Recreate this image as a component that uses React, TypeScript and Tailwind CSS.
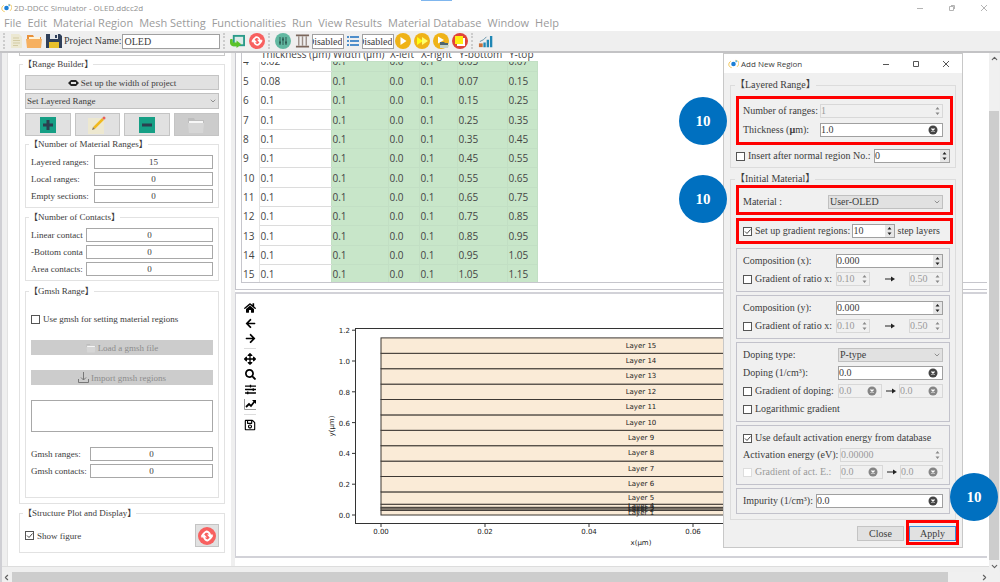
import type { ComponentProps, ReactNode } from "react"

import {
  FaArrowLeft,
  FaArrowRight,
  FaArrowsAlt,
  FaHome,
  FaRegSave,
  FaSearch,
  FaSlidersH,
} from "react-icons/fa"
import { LuChevronDown, LuChevronLeft, LuChevronRight, LuChevronUp } from "react-icons/lu"

const MENUS = [
  "File",
  "Edit",
  "Material Region",
  "Mesh Setting",
  "Functionalities",
  "Run",
  "View Results",
  "Material Database",
  "Window",
  "Help",
]

const COLUMNS = [
  { label: "", width: "w-[17px]" },
  { label: "Thickness (µm)", width: "w-[72px]" },
  { label: "Width (µm)", width: "w-[57px]" },
  { label: "X-left", width: "w-[31px]" },
  { label: "X-right", width: "w-[38px]" },
  { label: "Y-bottom", width: "w-[50px]" },
  { label: "Y-top", width: "w-[30px]" },
]

/**
 * Layer boundaries in µm, bottom to top
 */
const BOUNDS = [
  0, 0.03, 0.04, 0.05, 0.07, 0.15, 0.25, 0.35, 0.45, 0.55, 0.65, 0.75, 0.85, 0.95, 1.05, 1.15,
]

const ROWS = BOUNDS.slice(4).map((top, i) => {
  const bottom = BOUNDS[i + 3]
  const thickness = Number((top - bottom).toFixed(2))
  return [String(i + 4), String(thickness), "0.1", "0.0", "0.1", bottom.toFixed(2), top.toFixed(2)]
})

const toX = (v: number) => 145 + v * 5200
const toY = (v: number) => 221 - v * 154

export default function App() {
  return (
    <div className="flex h-screen flex-col overflow-hidden bg-white font-['Liberation_Serif','Noto_Sans_CJK_TC',serif] text-[9px] leading-3 text-[#3c3c3c]">
      <TitleBar />
      <MenuBar />
      <Toolbar />
      <main className="relative flex min-h-0 flex-1 border-l-2 border-[#cfcfd4] bg-[#efefef]">
        <div className="flex min-w-0 flex-1 flex-col">
          <div className="flex min-h-0 flex-1">
            <Sidebar />
            <div className="flex min-w-0 flex-1 flex-col bg-white pb-2">
              <RangeTable />
              <StructurePlot />
            </div>
          </div>
          <div className="h-1.5 border-t border-[#dddddd]" />
        </div>
        <div className="flex w-2.5 flex-col items-center bg-[#f0f0f0] text-[#606060]">
          <button aria-label="Scroll up" className="h-2.5">
            <LuChevronUp size={9} strokeWidth={3} />
          </button>
          <div className="mt-12 w-full flex-1 bg-[#cdcdcd]" />
          <button aria-label="Scroll down" className="h-3">
            <LuChevronDown size={9} strokeWidth={3} />
          </button>
        </div>
        <div className="w-px" />
        <AddRegionDialog />
      </main>
      <div className="flex h-2.5 items-center border-l-2 border-[#cfcfd4] bg-[#f0f0f0] text-[#606060]">
        <button aria-label="Scroll left" className="w-2.5">
          <LuChevronLeft size={9} strokeWidth={3} />
        </button>
        <div className="mr-8 h-full flex-1 bg-[#cdcdcd]" />
        <button aria-label="Scroll right" className="w-5">
          <LuChevronRight size={9} strokeWidth={3} />
        </button>
      </div>
    </div>
  )
}

function TitleBar() {
  return (
    <header className="flex h-[15px] items-center gap-0.5 pl-px font-['Open_Sans',sans-serif] text-[8px] text-[#8f8f8f]">
      <AppLogo />
      <h1>2D-DDCC Simulator - OLED.ddcc2d</h1>
      <div className="ml-[276px] h-px w-[31px] self-start bg-[#7fb6ee]" />
      <div className="flex-1" />
      <div className="flex gap-6 pr-3">
        <WindowControls color="#b4b4b4" restore />
      </div>
    </header>
  )
}

function MenuBar() {
  return (
    <nav className="flex h-4 items-center gap-1.5 pl-1 font-['Open_Sans',sans-serif] text-[11px] text-[#9b9b9b]">
      {MENUS.map((menu) => (
        <button className="whitespace-nowrap" key={menu}>
          {menu}
        </button>
      ))}
    </nav>
  )
}

function Toolbar() {
  return (
    <div className="flex h-[22px] shrink-0 items-center border-b-2 border-[#c3c3c5] bg-[#efefef] text-[10px]">
      <Grip />
      <button aria-label="New" className="mr-0.5">
        <svg height="16" viewBox="0 0 16 16" width="16">
          <path d="M3 1h8l3 3v11H3z" fill="#ece8d2" />
          <path d="M5 5h6M5 7.500h7M5 10h7M5 12.500h5" stroke="#d3cba4" />
        </svg>
      </button>
      <button aria-label="Open" className="mr-1">
        <svg height="16" viewBox="0 0 16 16" width="16">
          <path d="M1 2h6l1 2h7v3H1z" fill="#e8913a" />
          <path d="M3 4h11v3H3z" fill="#fff3d8" />
          <path d="M0 6h16l-1 9H1z" fill="#f6b060" />
        </svg>
      </button>
      <button aria-label="Save" className="mr-0.5">
        <svg height="16" viewBox="0 0 16 16" width="16">
          <path d="M0 1h14l2 2v12H0z" fill="#30405a" />
          <path d="M4 1h8v5H4z" fill="#e6e9ec" />
          <path d="M9 2h2v3H9z" fill="#30405a" />
          <path d="M3 9h10v6H3z" fill="#e8c02c" />
        </svg>
      </button>
      <label className="whitespace-nowrap" htmlFor="project">
        Project Name:
      </label>
      <input
        className="ml-px h-[15px] w-[98px] border border-[#a0a0a0] bg-white px-px"
        defaultValue="OLED"
        id="project"
      />
      <Grip />
      <button aria-label="Import project" className="mx-0.5">
        <svg height="15" viewBox="0 0 16 16" width="15">
          <rect fill="#dcebe8" height="10" stroke="#2a9b8a" strokeWidth="2" width="11" x="4" y="2" />
          <path d="M0 6c0-1 3-1 3 0v3h4V7l5 4-5 4v-2H4c-3 0-4-2-4-4z" fill="#5cc32a" />
        </svg>
      </button>
      <button aria-label="Refresh" className="ml-0.5">
        <RefreshIcon />
      </button>
      <Grip />
      <button aria-label="Settings" className="mr-1 ml-0.5">
        <svg height="16" viewBox="0 0 16 16" width="16">
          <circle cx="8" cy="8" fill="#62b8a1" r="8" />
          <path d="M5 4v8M8 4v8M11 4v8" stroke="#2f5d55" />
          <path d="M4 9.500h2M7 6.500h2M10 9.500h2" stroke="#2f5d55" strokeWidth="2" />
        </svg>
      </button>
      <button aria-label="Columns" className="mr-0.5">
        <svg height="16" viewBox="0 0 16 16" width="15">
          <path d="M1 2h14M1 14h14" stroke="#7b675c" strokeWidth="2" />
          <path d="M4 3v10M8 3v10M12 3v10" stroke="#9c8f88" strokeWidth="1.500" />
        </svg>
      </button>
      <input
        aria-label="Columns state"
        className="h-[15px] w-8 border border-[#a0a0a0] bg-white pr-px"
        defaultValue="Disabled"
        dir="rtl"
      />
      <button aria-label="List" className="mx-0.5">
        <svg height="14" viewBox="0 0 14 14" width="14">
          <path d="M1 3h2M1 7h2M1 11h2M4 3h9M4 7h9M4 11h9" stroke="#4f8fcb" strokeWidth="2" />
        </svg>
      </button>
      <input
        aria-label="List state"
        className="h-[15px] w-8 border border-[#a0a0a0] bg-white pr-px"
        defaultValue="Disabled"
        dir="rtl"
      />
      <div className="flex gap-[3px] pl-px">
        <button aria-label="Run">
          <svg height="16" viewBox="0 0 16 16" width="16">
            <circle cx="8" cy="8" fill="#efb318" r="8" />
            <path d="M5.500 4v8l6-4z" fill="#fff" />
          </svg>
        </button>
        <button aria-label="Run all">
          <svg height="16" viewBox="0 0 16 16" width="16">
            <circle cx="8" cy="8" fill="#efb318" r="8" />
            <path d="M3 4v8l6-4z" fill="#ffff10" />
            <path d="M8 4v8l6-4z" fill="#ffff70" />
          </svg>
        </button>
        <button aria-label="Run from folder">
          <svg height="16" viewBox="0 0 16 16" width="16">
            <circle cx="8" cy="8" fill="#efb318" r="8" />
            <path d="M5 3.500v7l6-3.500z" fill="#fff" />
            <path d="M7 9h4l1 1h3v5H7z" fill="#4d6670" />
            <path d="M7 12h9l-1 3H7z" fill="#c6d3c5" />
          </svg>
        </button>
        <button aria-label="Stop">
          <svg height="16" viewBox="0 0 16 16" width="16">
            <circle cx="8" cy="8" fill="#e0443b" r="8" />
            <path d="M5 5h8v8H5z" fill="#fff" />
            <path d="M3 3h8v8H3z" fill="#ffee10" />
          </svg>
        </button>
      </div>
      <Grip />
      <button aria-label="Charts" className="ml-0.5">
        <svg height="15" viewBox="0 0 16 16" width="15">
          <path d="M7 14V9M10.500 14V6M14 14V2" stroke="#1f87b5" strokeWidth="2.500" />
          <path d="M1 10h4v4H1z" fill="#c9703c" />
          <path d="M2 8l4-2 3-3" fill="none" stroke="#5d8fa8" />
        </svg>
      </button>
    </div>
  )
}

function Sidebar() {
  return (
    <aside className="mr-1 ml-[5px] w-[224px] shrink-0 border-l border-[#e2e2e2] bg-white pr-1.5 pl-[11px]">
      <div className="h-[3px] border-x border-b border-[#c9c9c9]" />
      <Group className="mt-0.5 pb-[5px]" title="Range Builder">
        <button className="flex h-[15px] w-full items-center justify-center gap-0.5 border border-[#c4c4c4] bg-[#e1e1e1]">
          <svg height="8" viewBox="0 0 11 8" width="11">
            <path d="M3 1h5v2H3zM3 5h5v2H3zM0 4l3-3v6zM11 4L8 1v6z" fill="#222" />
          </svg>
          Set up the width of project
        </button>
        <Dropdown className="mt-[3px] h-4" label="Range type" value="Set Layered Range" />
        <div className="mt-1 grid grid-cols-4 gap-1">
          <IconButton label="Add range">
            <svg height="16" viewBox="0 0 16 16" width="16">
              <path d="M0 0h16v16H0z" fill="#169f85" />
              <path d="M8 3v10M3 8h10" stroke="#2b3f4f" strokeWidth="3" />
            </svg>
          </IconButton>
          <IconButton label="Edit range">
            <svg height="20" viewBox="0 0 20 20" width="20">
              <path d="M1 3h16v16H1z" fill="#ede8d0" />
              <path d="M7 13L16 4" stroke="#f0b91f" strokeWidth="2.500" />
              <path d="M5 15l1-3 2 2z" fill="#8d7a52" />
              <circle cx="17" cy="3" fill="#e8615a" r="1.500" />
            </svg>
          </IconButton>
          <IconButton label="Remove range">
            <svg height="16" viewBox="0 0 16 16" width="16">
              <path d="M0 0h16v16H0z" fill="#169f85" />
              <path d="M3 8h10" stroke="#2b3f4f" strokeWidth="3" />
            </svg>
          </IconButton>
          <IconButton disabled label="Load range">
            <FolderIcon size={18} />
          </IconButton>
        </div>
        <Group className="mt-0.5 pb-1" title="Number of Material Ranges">
          <div className="flex flex-col gap-[3px]">
            <Counter label="Layered ranges:" value="15" width="w-[119px]" />
            <Counter label="Local ranges:" value="0" width="w-[119px]" />
            <Counter label="Empty sections:" value="0" width="w-[119px]" />
          </div>
        </Group>
        <Group className="mt-[3px] pb-1" title="Number of Contacts">
          <div className="flex flex-col gap-[3px]">
            <Counter label="Linear contact" value="0" width="w-[127px]" />
            <Counter label="-Bottom conta" value="0" width="w-[127px]" />
            <Counter label="Area contacts:" value="0" width="w-[127px]" />
          </div>
        </Group>
        <Group className="mt-1 pb-[19px]" title="Gmsh Range">
          <div className="flex flex-col gap-[15px] pt-[11px]">
            <Check label="Use gmsh for setting material regions" />
            <button
              className="flex h-[15px] items-center justify-center gap-0.5 bg-[#cccccc] text-[#8c8c8c]"
              disabled
            >
              <FolderIcon size={10} />
              Load a gmsh file
            </button>
            <button
              className="flex h-[15px] items-center justify-center gap-0.5 bg-[#cccccc] text-[#8c8c8c]"
              disabled
            >
              <svg fill="none" height="11" stroke="#777" viewBox="0 0 11 11" width="11">
                <path d="M5.500 0v8M3 5.500L5.500 8 8 5.500M.5 7v3.500h10V7" />
              </svg>
              Import gmsh regions
            </button>
            <textarea
              aria-label="Gmsh information"
              className="block h-8 w-full resize-none border border-[#a8a8a8] bg-white"
            />
            <div className="flex flex-col gap-[3px]">
              <Counter label="Gmsh ranges:" value="0" width="w-[123px]" />
              <Counter label="Gmsh contacts:" value="0" width="w-[123px]" />
            </div>
          </div>
        </Group>
      </Group>
      <Group className="mt-[3px] pb-[5px]" title="Structure Plot and Display">
        <div className="flex items-center justify-between">
          <Check checked label="Show figure" />
          <button
            aria-label="Refresh plot"
            className="grid h-[23px] w-6 place-items-center border border-[#c4c4c4] bg-[#e1e1e1]"
          >
            <RefreshIcon size={18} />
          </button>
        </div>
      </Group>
    </aside>
  )
}

function RangeTable() {
  return (
    <section className="mr-0.5 h-[237px] shrink-0 border-b border-l border-[#c6c6cc] pb-1.5 pl-[5px]">
      <div className="h-full overflow-hidden border-b border-l border-[#c6c6cc]">
        <table className="w-[295px] table-fixed border-collapse font-['Open_Sans',sans-serif] text-[10px] text-[#444444]">
          <thead>
            <tr>
              {COLUMNS.map((col) => (
                <th className={`${col.width} p-0 text-left font-normal`} key={col.label}>
                  <div className="flex h-2 items-end overflow-hidden pb-px pl-0.5 whitespace-nowrap">
                    {col.label}
                  </div>
                </th>
              ))}
            </tr>
          </thead>
          <tbody>
            {ROWS.map((row, r) => (
              <tr className={r === 0 ? "h-2.5" : r % 3 === 0 ? "h-5" : "h-[19px]"} key={row[0]}>
                {row.map((cell, c) => (
                  <td
                    className={
                      c === 0
                        ? "border-r border-[#e4e4e4] p-0 pl-px"
                        : c === 1
                          ? "border-b border-[#dcdcdc] p-0 pl-px"
                          : "border border-[#c2dfc4] bg-[#c8e6c9] p-0 pl-px"
                    }
                    key={COLUMNS[c].label}
                  >
                    {r === 0 ? (
                      <div className="flex h-[9px] items-end overflow-hidden pb-1">{cell}</div>
                    ) : (
                      cell
                    )}
                  </td>
                ))}
              </tr>
            ))}
          </tbody>
        </table>
      </div>
    </section>
  )
}

function StructurePlot() {
  return (
    <section className="mt-0.5 mr-0.5 flex min-h-0 flex-1 items-start overflow-hidden border-y-2 border-l border-[#d2d2d8]">
      <div className="flex w-7 shrink-0 flex-col items-center gap-1 pt-2 text-[12px] text-black">
        <button aria-label="Home">
          <FaHome />
        </button>
        <button aria-label="Back">
          <FaArrowLeft size={11} />
        </button>
        <button aria-label="Forward">
          <FaArrowRight size={11} />
        </button>
        <hr className="w-3 border-[#dddddd]" />
        <button aria-label="Pan">
          <FaArrowsAlt />
        </button>
        <button aria-label="Zoom">
          <FaSearch size={11} />
        </button>
        <button aria-label="Subplots">
          <FaSlidersH size={11} />
        </button>
        <button aria-label="Axes">
          <svg fill="none" height="11" viewBox="0 0 12 11" width="12">
            <path d="M.5 0v10.500H12" stroke="#999" />
            <path d="M2 8l3-3 2 2 3.500-4.500" stroke="#000" strokeWidth="1.800" />
            <path d="M8 1h4v4z" fill="#000" />
          </svg>
        </button>
        <hr className="w-3 border-[#dddddd]" />
        <button aria-label="Save figure">
          <FaRegSave />
        </button>
      </div>
      <svg
        className="pointer-events-none -ml-7 h-[260px] w-[720px] shrink-0 font-['DejaVu_Sans',sans-serif] text-[7px]"
        fill="#222"
      >
        <rect fill="none" height="195" stroke="#333" width="572" x="119.500" y="34.500" />
        {BOUNDS.slice(1).map((top, i) => (
          <rect
            fill="#faebd7"
            height={toY(BOUNDS[i]) - toY(top)}
            key={top}
            stroke="#3d3833"
            width={toX(0.1) - toX(0)}
            x={toX(0)}
            y={toY(top)}
          />
        ))}
        {BOUNDS.slice(1).map((top, i) => (
          <text key={top} textAnchor="middle" x={toX(0.05)} y={toY((top + BOUNDS[i]) / 2) + 2}>
            Layer {i + 1}
          </text>
        ))}
        {[0, 0.2, 0.4, 0.6, 0.8, 1, 1.2].map((v) => (
          <g key={v}>
            <path d={`M116 ${toY(v)}h3`} stroke="#333" />
            <text textAnchor="end" x="114" y={toY(v) + 3}>
              {v.toFixed(1)}
            </text>
          </g>
        ))}
        {[0, 0.02, 0.04, 0.06, 0.08, 0.1].map((v) => (
          <g key={v}>
            <path d={`M${toX(v)} 230v3`} stroke="#333" />
            <text textAnchor="middle" x={toX(v)} y="240">
              {v.toFixed(2)}
            </text>
          </g>
        ))}
        <text textAnchor="middle" x={toX(0.05)} y="251">
          x(µm)
        </text>
        <text textAnchor="middle" transform="rotate(-90 98 132)" x="98" y="132">
          y(µm)
        </text>
      </svg>
    </section>
  )
}

function AddRegionDialog() {
  return (
    <section
      aria-label="Add New Region"
      className="absolute top-0 right-[37px] w-[240px] border border-[#c8c8c8] bg-[#f0f0f0] pb-[5px] text-[10px]"
      role="dialog"
    >
      <header className="flex h-[19px] items-center gap-0.5 bg-white pl-1 font-['Open_Sans',sans-serif] text-[8px]">
        <AppLogo />
        <h2 className="flex-1">Add New Region</h2>
        <div className="flex gap-[22px] pr-3">
          <WindowControls color="#555" />
        </div>
      </header>
      <form className="px-1.5 pt-1.5" onSubmit={(e) => e.preventDefault()}>
        <fieldset className="border border-[#dcdcdc] pr-0.5 pb-1 pl-[5px]">
          <legend className="ml-[-1px]">【Layered Range】</legend>
          <div className="mt-[5px] flex flex-col gap-[5px] border-[3px] border-[#ff0000] py-[5px] pr-[7px] pl-1">
            <Row>
              <label htmlFor="ranges">Number of ranges:</label>
              <Spin className="w-[123px]" disabled id="ranges" value="1" />
            </Row>
            <Row>
              <label htmlFor="thickness">
                Thickness (<b>µ</b>m):
              </label>
              <Clearable className="w-[123px]" id="thickness" value="1.0" />
            </Row>
          </div>
          <div className="mt-1 mr-[3px]">
            <Row>
              <Check label="Insert after normal region No.:" />
              <Spin aria-label="Region number" className="w-[76px]" value="0" />
            </Row>
          </div>
        </fieldset>
        <fieldset className="mt-[5px] border border-[#dcdcdc] pr-0.5 pb-[5px] pl-[5px]">
          <legend className="ml-[-1px]">【Initial Material】</legend>
          <div className="border-[3px] border-[#ff0000] pt-[7px] pr-[7px] pb-[3px] pl-1">
            <Row>
              <span>Material :</span>
              <Dropdown className="h-3.5 w-[115px]" label="Material" value="User-OLED" />
            </Row>
          </div>
          <div className="mt-[3px] mb-1 border-[3px] border-[#ff0000] py-[3px] pr-2.5 pl-1">
            <Row>
              <Check checked label="Set up gradient regions:" />
              <Spin aria-label="Steps" className="w-[43px]" value="10" />
              <span>step layers</span>
            </Row>
          </div>
          <Frame>
            <Row>
              <label htmlFor="compx">Composition (x):</label>
              <Spin className="w-[107px]" id="compx" value="0.000" />
            </Row>
            <GradientRange />
          </Frame>
          <Frame>
            <Row>
              <label htmlFor="compy">Composition (y):</label>
              <Spin className="w-[107px]" id="compy" value="0.000" />
            </Row>
            <GradientRange />
          </Frame>
          <Frame>
            <Row>
              <span>Doping type:</span>
              <Dropdown className="h-3.5 w-[105px]" label="Doping type" value="P-type" />
            </Row>
            <Row>
              <label htmlFor="doping">Doping (1/cm³):</label>
              <Clearable className="w-[105px]" id="doping" value="0.0" />
            </Row>
            <Row>
              <Check label="Gradient of doping:" />
              <div className="flex w-[105px] items-center justify-between">
                <Clearable aria-label="Doping from" className="w-11" disabled value="0.0" />
                <Arrow />
                <Clearable aria-label="Doping to" className="w-11" disabled value="0.0" />
              </div>
            </Row>
            <Row>
              <Check label="Logarithmic gradient" />
            </Row>
          </Frame>
          <Frame tight>
            <Row>
              <Check checked label="Use default activation energy from database" />
            </Row>
            <Row>
              <label htmlFor="energy">Activation energy (eV):</label>
              <Spin className="w-[103px]" disabled id="energy" value="0.00000" />
            </Row>
            <Row>
              <Check disabled label="Gradient of act. E.:" />
              <div className="flex w-[103px] items-center justify-between">
                <Clearable aria-label="Energy from" className="w-[43px]" disabled value="0.0" />
                <Arrow />
                <Clearable aria-label="Energy to" className="w-[43px]" disabled value="0.0" />
              </div>
            </Row>
          </Frame>
          <Frame>
            <Row>
              <label htmlFor="impurity">Impurity (1/cm³):</label>
              <Clearable className="w-[127px]" id="impurity" value="0.0" />
            </Row>
          </Frame>
        </fieldset>
        <div className="mt-[3px] flex justify-end gap-[5px]">
          <button className="mt-[3px] h-[15px] w-[47px] border border-[#c4c4c4] bg-[#e1e1e1]">
            Close
          </button>
          <div className="pt-[3px] pb-px outline-[3px] outline-[#ff0000] outline-solid">
            <button className="block h-[15px] w-[47px] border border-[#3b8edb] bg-[#e1e1e1]">
              Apply
            </button>
          </div>
        </div>
      </form>
      <StepBadge className="top-[43px] -left-[45px]" />
      <StepBadge className="top-[121px] -left-[45px]" />
      <StepBadge className="-right-[36px] bottom-[26px]" />
    </section>
  )
}

function GradientRange() {
  return (
    <Row>
      <Check label="Gradient of ratio x:" />
      <div className="flex w-[107px] items-center justify-between">
        <Spin aria-label="Ratio from" className="w-[34px]" disabled value="0.10" />
        <Arrow />
        <Spin aria-label="Ratio to" className="w-[34px]" disabled value="0.50" />
      </div>
    </Row>
  )
}

function Group({ children, className, title }: { children: ReactNode; className: string; title: string }) {
  return (
    <fieldset className={`border border-[#e2e2e2] px-[5px] ${className}`}>
      <legend className="-ml-0.5">【{title}】</legend>
      <div className="pt-[5px]">{children}</div>
    </fieldset>
  )
}

function Frame({ children, tight }: { children: ReactNode; tight?: boolean }) {
  return (
    <div
      className={`mt-[3px] mr-[3px] flex flex-col border border-[#c2c2cb] px-1.5 py-[5px] ${tight ? "gap-[3px]" : "gap-1"}`}
    >
      {children}
    </div>
  )
}

function Row({ children }: { children: ReactNode }) {
  return <div className="flex h-3.5 items-center justify-between whitespace-nowrap">{children}</div>
}

function Counter({ label, value, width }: { label: string; value: string; width: string }) {
  return (
    <label className="flex items-center justify-between whitespace-nowrap">
      {label}
      <input className={`${width} h-3.5 border border-[#a8a8a8] bg-white text-center`} defaultValue={value} />
    </label>
  )
}

function Check({ checked, disabled, label }: { checked?: boolean; disabled?: boolean; label: string }) {
  return (
    <label className={`flex items-center gap-[3px] ${disabled ? "text-[#9a9a9a]" : ""}`}>
      <span className="grid">
        <input
          className={`col-start-1 row-start-1 size-[9px] appearance-none border bg-white ${disabled ? "border-[#dddddd]" : "border-[#555555]"}`}
          defaultChecked={checked}
          disabled={disabled}
          type="checkbox"
        />
        {checked && (
          <svg
            className="pointer-events-none col-start-1 row-start-1"
            fill="none"
            height="9"
            stroke="#444"
            viewBox="0 0 9 9"
            width="9"
          >
            <path d="M2 4.500l2 2 3.500-4" />
          </svg>
        )}
      </span>
      {label}
    </label>
  )
}

function Dropdown({ className, label, value }: { className: string; label: string; value: string }) {
  return (
    <div className={`grid items-center border border-[#c0c0c0] bg-[#e1e1e1] ${className}`}>
      <select aria-label={label} className="col-start-1 row-start-1 h-3 appearance-none pl-px leading-3">
        <option>{value}</option>
      </select>
      <LuChevronDown
        className="pointer-events-none col-start-1 row-start-1 mr-px justify-self-end"
        color="#666"
        size={8}
      />
    </div>
  )
}

type FieldProps = ComponentProps<"input"> & { value: string }

function Spin({ className, disabled, value, ...rest }: FieldProps) {
  return (
    <div
      className={`flex h-3.5 items-center border ${disabled ? "border-[#d8d8d8] text-[#9a9a9a]" : "border-[#a0a0a0] bg-white"} ${className}`}
    >
      <input className="w-0 min-w-0 flex-1" defaultValue={value} disabled={disabled} {...rest} />
      <svg
        className={disabled ? "bg-[#f0f0f0]" : "bg-[#e6e6e6]"}
        fill={disabled ? "#888" : "#222"}
        height="12"
        viewBox="0 0 9 12"
        width="9"
      >
        <path d="M2.500 4.500h4l-2-2.500zM2.500 7.500h4l-2 2.500z" />
      </svg>
    </div>
  )
}

function Clearable({ className, disabled, value, ...rest }: FieldProps) {
  return (
    <div
      className={`flex h-3.5 items-center border pr-1 ${disabled ? "border-[#d8d8d8] text-[#9a9a9a]" : "border-[#a0a0a0] bg-white"} ${className}`}
    >
      <input className="w-0 min-w-0 flex-1" defaultValue={value} disabled={disabled} {...rest} />
      <button aria-label="Clear" disabled={disabled} type="button">
        <svg height="10" viewBox="0 0 10 10" width="10">
          <circle cx="5" cy="5" fill={disabled ? "#858585" : "#444"} r="4.500" />
          <path d="M3.500 3.500l3 3M6.500 3.500l-3 3" stroke="#fff" strokeWidth="1.300" />
        </svg>
      </button>
    </div>
  )
}

function Arrow() {
  return (
    <svg height="6" viewBox="0 0 10 6" width="10">
      <path d="M0 3h7" stroke="#222" />
      <path d="M6 .5L10 3 6 5.500z" fill="#222" />
    </svg>
  )
}

function StepBadge({ className }: { className: string }) {
  return (
    <div
      className={`absolute grid size-12 place-items-center rounded-full bg-[#0070c0] text-[15px] font-bold text-white ${className}`}
    >
      10
    </div>
  )
}

function Grip() {
  return <div className="mx-[3px] h-4 border-l-2 border-dotted border-[#cccccc]" />
}

function IconButton({ children, disabled, label }: { children: ReactNode; disabled?: boolean; label: string }) {
  return (
    <button
      aria-label={label}
      className={`grid h-[23px] place-items-center border border-[#c4c4c4] ${disabled ? "bg-[#cccccc]" : "bg-[#e1e1e1]"}`}
      disabled={disabled}
    >
      {children}
    </button>
  )
}

function WindowControls({ color, restore }: { color: string; restore?: boolean }) {
  return (
    <>
      <button aria-label="Minimize">
        <svg height="8" stroke={color} viewBox="0 0 8 8" width="8">
          <path d="M1 4.500h6" />
        </svg>
      </button>
      <button aria-label="Maximize">
        <svg fill="none" height="8" stroke={color} viewBox="0 0 8 8" width="8">
          {restore ? <path d="M1.500 2.500h4v4h-4zM3 1.500h3.500V5" /> : <path d="M1.500 1.500h5v5h-5z" />}
        </svg>
      </button>
      <button aria-label="Close window">
        <svg height="8" stroke={color} viewBox="0 0 8 8" width="8">
          <path d="M1 1l6 6M7 1L1 7" />
        </svg>
      </button>
    </>
  )
}

function AppLogo() {
  return (
    <svg fill="none" height="10" viewBox="0 0 12 10" width="11">
      <path d="M3 2C0 4 0 8 4 9M8 1c4 0 5 4 2 7" stroke="#f0c24a" />
      <circle cx="6" cy="5" fill="#1b7fd6" r="2.500" />
      <circle cx="9" cy="2" fill="#5bb3ea" r="1" />
    </svg>
  )
}

/**
 * Two arrows chasing each other on a red disc
 */
function RefreshIcon({ size = 16 }: { size?: number }) {
  return (
    <svg fill="none" height={size} viewBox="0 0 24 24" width={size}>
      <circle cx="12" cy="12" fill="#f8605f" r="12" />
      <g stroke="#fff" strokeWidth="2.500">
        <path d="M5 13c0-2 4-6 6-7 2 0 5 2 5 5" />
        <path d="M19 11c0 2-4 6-6 7-2 0-5-2-5-5" />
      </g>
      <path d="M12 10h8l-4 4.500zM12 14H4l4-4.500z" fill="#fff" />
    </svg>
  )
}

function FolderIcon({ size }: { size: number }) {
  return (
    <svg height={size} viewBox="0 0 18 18" width={size}>
      <path d="M1 2h6l1 2h9v4H1z" fill="#bdbdbd" />
      <path d="M2 5h14v3H2z" fill="#f7f7f7" />
      <path d="M1 7h16l-1 10H2z" fill="#d6d6d6" />
    </svg>
  )
}
